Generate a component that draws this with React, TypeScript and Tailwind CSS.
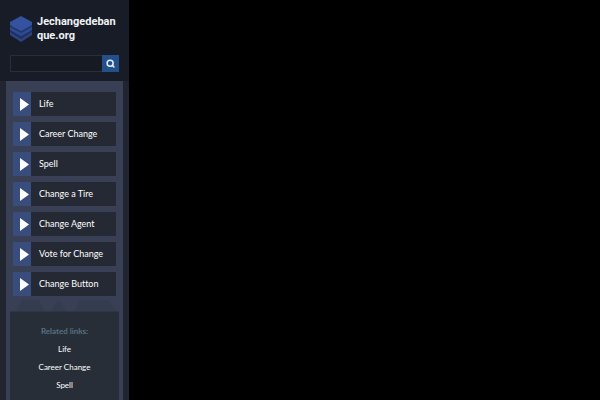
import { Search } from "lucide-react";

const topics = [
  "Life",
  "Career Change",
  "Spell",
  "Change a Tire",
  "Change Agent",
  "Vote for Change",
  "Change Button",
];

const relatedLinks = ["Life", "Career Change", "Spell"];

const Logo = () => (
  <svg viewBox="0 0 24 28" className="h-7 w-6 shrink-0" aria-hidden="true">
    <path d="M1 17 12 11l11 6v3l-11 7L1 20z" fill="#2b437f" />
    <path d="M1 15 12 21l11-6v2l-11 7L1 17z" fill="#1f3161" />
    <path d="M1 12 12 6l11 6v3l-11 6L1 15z" fill="#2e4a90" />
    <path d="M1 10 12 16l11-6v2l-11 6L1 12z" fill="#21376b" />
    <path d="M1 7 12 1l11 6v3l-11 6L1 10z" fill="#34529f" />
  </svg>
);

const Header = () => (
  <header className="bg-[#171c26] px-[10px] pt-[15px] pb-[9px]">
    <div className="-ml-px flex items-start gap-1">
      <Logo />
      <h1 className="min-w-0 flex-1 text-[11px] leading-[14px] font-bold break-all text-[#f1f3f6] font-['Roboto','Liberation_Sans',sans-serif]">
        Jechangedebanque.org
      </h1>
    </div>
    <form className="mt-3 flex h-[17px]" onSubmit={(e) => e.preventDefault()}>
      <input
        type="text"
        aria-label="Search"
        className="min-w-0 flex-1 border border-r-0 border-[#292e38] bg-[#151a23] px-1 text-[9px] text-white outline-none"
      />
      <button
        type="submit"
        aria-label="Submit search"
        className="flex w-[17px] items-center justify-center bg-[#23508a] text-[#e6f0fa]"
      >
        <Search className="h-[9px] w-[9px]" strokeWidth={4} />
      </button>
    </form>
  </header>
);

const TopicLink = ({ label }: { label: string }) => (
  <a href="#" className="flex h-6 items-stretch bg-[#242933] text-[9px] text-white">
    <span className="flex w-[18px] items-center justify-end bg-[#394d7c] pr-[2px]">
      <svg viewBox="0 0 9 13" className="h-[13px] w-[9px]" aria-hidden="true">
        <path d="M0 0 9 6.500 0 13z" fill="#fff" />
      </svg>
    </span>
    <span className="flex items-center pl-2">{label}</span>
  </a>
);

export default function App() {
  return (
    <div className="min-h-screen bg-black font-['Lato','Open_Sans',sans-serif] [font-variant-ligatures:none]">
      <div className="flex min-h-screen w-[129px] flex-col bg-[#20252f]">
        <Header />
        <main className="mx-[6px] flex flex-1 flex-col bg-[#394056]">
          <nav className="flex flex-col gap-[6px] px-[7px] pt-[11px]">
            {topics.map((topic) => (
              <TopicLink key={topic} label={topic} />
            ))}
          </nav>
          <svg viewBox="0 0 116 15" className="h-[15px] w-full" aria-hidden="true">
            <path d="M9 15 16 4h16l7 11zM44 15l8-11 8 11zM67 15l7-11h28l8 11z" fill="#343c50" />
          </svg>
          <section className="mx-1 flex-1 border-t border-[#303743] bg-[#272e37] pt-[10px] text-center text-[8px] leading-[18px] text-white">
            <h2 className="font-bold text-[#587084]">Related links:</h2>
            <ul>
              {relatedLinks.map((link) => (
                <li key={link}>
                  <a href="#">{link}</a>
                </li>
              ))}
            </ul>
          </section>
        </main>
      </div>
    </div>
  );
}
